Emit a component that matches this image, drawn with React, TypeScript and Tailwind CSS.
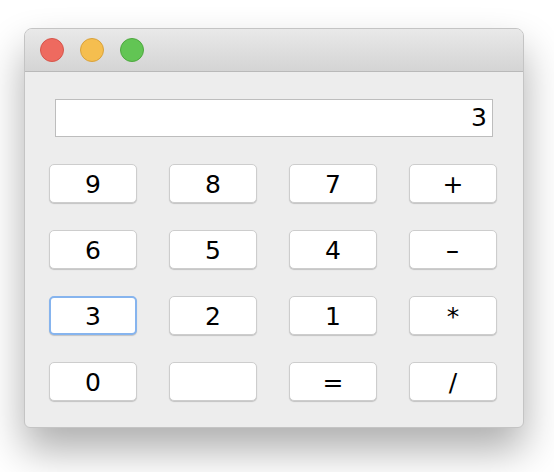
import React from 'react';

const keys = ['9', '8', '7', '+', '6', '5', '4', '-', '3', '2', '1', '*', '0', '', '=', '/'];

export default function App() {
  return (
    <div className="w-[554px] h-[472px] bg-white pl-[24px] pt-[28px] overflow-hidden" style={{ fontFamily: '"DejaVu Sans", sans-serif' }}>
      <div className="w-[500px] h-[400px] flex flex-col rounded-t-[8px] rounded-b-[6px] border border-[#c4c4c4] bg-[#ededed] shadow-[0_22px_40px_rgba(0,0,0,0.32)] overflow-hidden">
        {/* Title bar */}
        <div className="h-[43px] shrink-0 flex items-center gap-[16px] pl-[15px] bg-gradient-to-b from-[#e9e9e9] to-[#d4d4d4] border-b border-[#b9b9b9]">
          <span className="w-[24px] h-[24px] rounded-full bg-[#ee6a5f] border border-[#d6554b]" />
          <span className="w-[24px] h-[24px] rounded-full bg-[#f5be4f] border border-[#d9a23b]" />
          <span className="w-[24px] h-[24px] rounded-full bg-[#62c554] border border-[#4ea83f]" />
        </div>

        {/* Display */}
        <div className="pt-[27px] pl-[30px] pr-[30px]">
          <div className="h-[38px] bg-white border border-[#bdbdbd] flex items-center justify-end pr-[5px] text-[25px] text-black">
            3
          </div>
        </div>

        {/* Keys */}
        <div className="grid grid-cols-[repeat(4,88px)] gap-x-[32px] gap-y-[27px] pl-[24px] pt-[27px]">
          {keys.map((k, i) => (
            <button
              key={i}
              className={
                'h-[39px] rounded-[5px] bg-white flex items-center justify-center pt-[2px] text-[25px] text-black shadow-[0_1px_1px_rgba(0,0,0,0.18)] ' +
                (k === '3' ? 'border-2 border-[#86b4ee]' : 'border border-[#cdcdcd]')
              }
            >
              {k === '-' ? <span className="inline-block scale-x-[1.6]">-</span> : k}
            </button>
          ))}
        </div>
      </div>
    </div>
  );
}
